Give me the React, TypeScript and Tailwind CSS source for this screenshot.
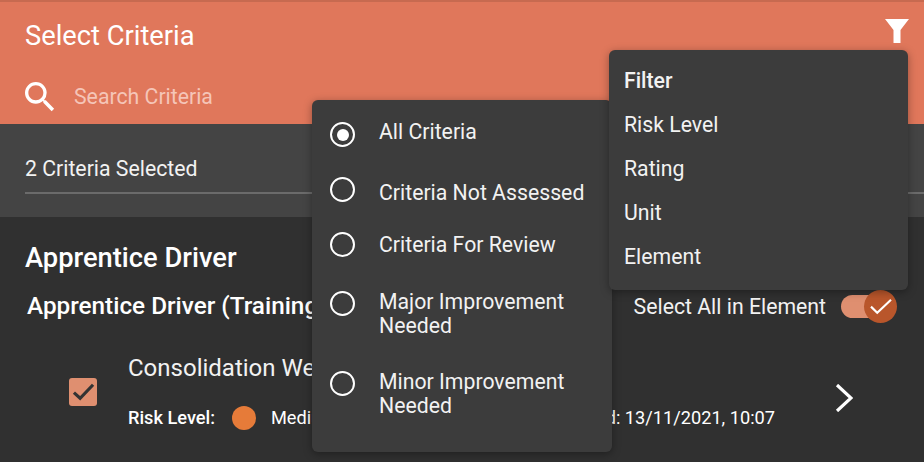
import { MdSearch } from "react-icons/md";

const filters = ["Risk Level", "Rating", "Unit", "Element"];

function Radio({ selected }: { selected?: boolean }) {
  return (
    <span className="flex h-[25px] w-[25px] shrink-0 items-center justify-center rounded-full border-[2.5px] border-white">
      {selected && <span className="h-[12px] w-[12px] rounded-full bg-white" />}
    </span>
  );
}

function CriteriaMenu() {
  return (
    <div className="absolute left-[312px] top-[100px] h-[352px] w-[300px] rounded-[6px] bg-[#3c3c3c] text-[21.25px] leading-[24px] text-[#f2f2f2] shadow-[0_2px_8px_rgba(0,0,0,0.35)]">
      <div className="flex items-start pl-[18px] pt-[22px]">
        <Radio selected />
        <span className="ml-[24px] mt-[-2px]">All Criteria</span>
      </div>
      <div className="flex items-start pl-[18px] pt-[30px]">
        <Radio />
        <span className="ml-[24px] mt-[4px]">Criteria Not Assessed</span>
      </div>
      <div className="flex items-start pl-[18px] pt-[27px]">
        <Radio />
        <span className="ml-[24px] mt-[1px]">Criteria For Review</span>
      </div>
      <div className="flex items-start pl-[18px] pt-[34px]">
        <Radio />
        <span className="ml-[24px] mt-[-1px]">
          Major Improvement
          <br />
          Needed
        </span>
      </div>
      <div className="flex items-start pl-[18px] pt-[33px]">
        <Radio />
        <span className="ml-[24px] mt-[-1px]">
          Minor Improvement
          <br />
          Needed
        </span>
      </div>
    </div>
  );
}

function FilterMenu() {
  return (
    <div className="absolute left-[609px] top-[50px] flex h-[240px] w-[299px] flex-col rounded-[6px] bg-[#3c3c3c] px-[15px] pt-[9px] text-[21.25px] leading-[44px] text-[#f2f2f2] shadow-[0_2px_8px_rgba(0,0,0,0.35)]">
      <span className="font-medium">Filter</span>
      {filters.map((item) => (
        <span key={item}>{item}</span>
      ))}
    </div>
  );
}

export default function App() {
  return (
    <div className="relative h-[462px] w-[924px] overflow-hidden bg-[#303030] font-['Roboto',sans-serif] text-white">
      <header className="h-[124px] border-t-2 border-[#c76a50] bg-[#e0775b] pl-[25px] pr-[15px]">
        <div className="flex items-start justify-between pt-[17px]">
          <h1 className="text-[27.3px] leading-[34px] text-white">Select Criteria</h1>
          <svg viewBox="0 0 24 24" className="h-[24px] w-[24px]" fill="white">
            <path d="M0 0h24L15.5 11V24H8.5V11Z" />
          </svg>
        </div>
        <div className="mt-[24px] flex items-center">
          <MdSearch className="ml-[-5px] h-[40px] w-[40px]" />
          <span className="ml-[14px] text-[21.25px] leading-[28px] text-[#f5c5b8]">Search Criteria</span>
        </div>
      </header>
      <section className="h-[93px] bg-[#444444] pl-[25px] pt-[31px]">
        <p className="text-[21.25px] leading-[28px] text-[#f2f2f2]">2 Criteria Selected</p>
        <div className="mt-[9px] h-[2px] bg-[#6b6b6b]" />
      </section>
      <section className="pl-[25px] pt-[24px]">
        <h2 className="text-[27.3px] font-medium leading-[34px]">Apprentice Driver</h2>
        <div className="mt-[16px] flex items-center justify-between pr-[33px]">
          <span className="pl-[2px] text-[24.3px] font-medium leading-[30px]">Apprentice Driver (Training)</span>
          <div className="flex items-center">
            <span className="mt-[1px] text-[21.25px] leading-[28px] text-[#f2f2f2]">Select All in Element</span>
            <span className="relative ml-[15px] h-[23px] w-[50px] rounded-full bg-[#df8f70]">
              <span className="absolute right-[-6px] top-[-5px] flex h-[33px] w-[33px] items-center justify-center rounded-full bg-[#b9562b]">
                <svg viewBox="0 0 24 24" className="h-[30px] w-[30px] shrink-0" fill="none" stroke="white" strokeWidth={1.7}>
                  <path d="M4 12.5l5 5L20 7" />
                </svg>
              </span>
            </span>
          </div>
        </div>
        <div className="mt-[32px] flex items-center pl-[44px] pr-[71px]">
          <span className="flex h-[28px] w-[28px] shrink-0 items-center justify-center rounded-[3px] bg-[#df8f70]">
            <svg viewBox="0 0 24 24" className="h-[27px] w-[27px] shrink-0" fill="none" stroke="#333333" strokeWidth={2.8}>
              <path d="M3.5 13l5.5 5L20.5 6" />
            </svg>
          </span>
          <div className="ml-[31px] flex-1">
            <p className="text-[24px] leading-[30px] text-[#f2f2f2]">Consolidation Week</p>
            <div className="mt-[23px] flex items-center text-[18.2px] leading-[24px]">
              <span className="font-medium">Risk Level:</span>
              <span className="ml-[17px] h-[24px] w-[24px] rounded-full bg-[#e67b39]" />
              <span className="ml-[15px]">Medium</span>
              <span className="ml-auto mr-[60px]">Last Assessed: 13/11/2021, 10:07</span>
            </div>
          </div>
          <svg viewBox="0 0 18 28" className="mt-[12px] h-[28px] w-[18px]" fill="none" stroke="white" strokeWidth={3.2}>
            <path d="M2 1l14 13L2 27" />
          </svg>
        </div>
      </section>
      <CriteriaMenu />
      <FilterMenu />
    </div>
  );
}
